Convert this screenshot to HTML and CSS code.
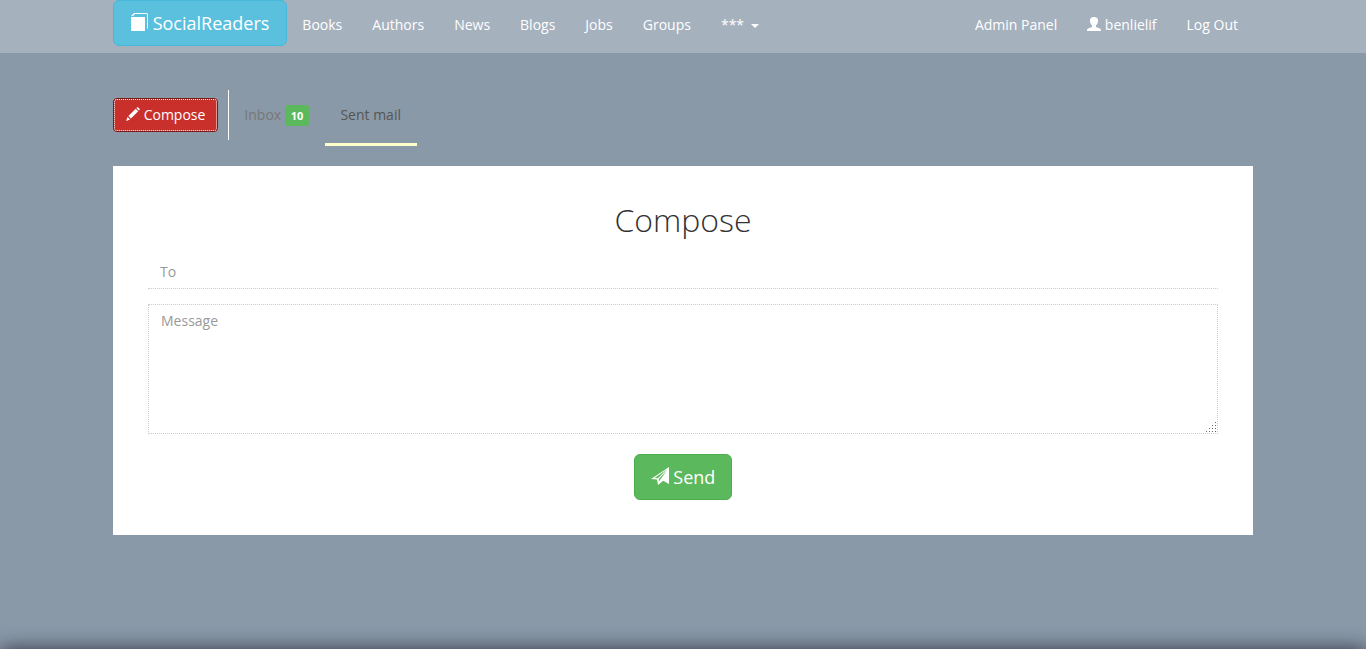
FILE: index.html
```html
<!DOCTYPE html>
<html lang="en">
<head>
<meta charset="utf-8">
<meta name="viewport" content="width=device-width, initial-scale=1">
<title>SocialReaders</title>
<link rel="stylesheet" href="styles.css">
</head>
<body>
<header class="navbar">
  <nav class="container navbar-inner">
    <a class="brand" href="#"><svg class="icon-lg" viewBox="0 0 18 18" aria-hidden="true"><path fill="currentColor" d="M1 4h14V18H2Q1 18 1 17zM1 3L4 0H16.500Q18 0 18 1.500V15L17 16V1H5L3 3z"/></svg> SocialReaders</a>
    <a class="nav-link" href="#">Books</a>
    <a class="nav-link" href="#">Authors</a>
    <a class="nav-link" href="#">News</a>
    <a class="nav-link" href="#">Blogs</a>
    <a class="nav-link" href="#">Jobs</a>
    <a class="nav-link" href="#">Groups</a>
    <a class="nav-link" href="#">*** <span class="caret"></span></a>
    <div class="nav-right">
      <a class="nav-link" href="#">Admin Panel</a>
      <a class="nav-link" href="#"><svg class="icon" viewBox="0 0 14 14" aria-hidden="true"><path fill="currentColor" d="M7 0C9.800 0 11 1.300 11 3.400C11 5.500 10.300 7.400 9 8.300V10L13 11.500Q14 12 14 13V14H0V13Q0 12 1 11.500L5 10V8.300C3.700 7.400 3 5.500 3 3.400C3 1.300 4.200 0 7 0z"/></svg> benlielif</a>
      <a class="nav-link" href="#">Log Out</a>
    </div>
  </nav>
</header>
<main class="container">
  <nav class="mail-tabs">
    <div class="compose-cell">
      <button class="compose-btn" type="button"><svg class="icon" viewBox="0 0 14 14" aria-hidden="true"><path fill="currentColor" d="M10.400 1.100L11.200.3Q11.600 0 12 .3L13.700 2Q14 2.400 13.700 2.800L12.900 3.600zM9.700 1.800L12.200 4.300L4.900 11.600L2.400 9.100zM1.600 9.900L4.100 12.400L0 14z"/></svg> Compose</button>
    </div>
    <a class="tab" href="#">Inbox <span class="badge">10</span></a>
    <a class="tab tab-active" href="#">Sent mail</a>
  </nav>
  <form class="panel">
    <h1 class="title">Compose</h1>
    <input class="field" type="text" placeholder="To" aria-label="To">
    <div class="message-wrap">
      <textarea class="message" placeholder="Message" aria-label="Message"></textarea>
      <svg class="grip" viewBox="0 0 10 10" shape-rendering="crispEdges" aria-hidden="true"><path fill="#666" d="M9 0h1v1H9zM9 3h1v1H9zM6 3h1v1H6zM9 6h1v1H9zM6 6h1v1H6zM3 6h1v1H3zM9 9h1v1H9zM6 9h1v1H6zM3 9h1v1H3zM0 9h1v1H0z"/></svg>
    </div>
    <button class="send-btn" type="button"><svg class="icon-lg" viewBox="0 0 18 18" aria-hidden="true"><path fill="currentColor" d="M18 0V17L12.200 13.800L7 18L6 12.500L0 12zM15.800 2.300L3.800 11L6.900 11.300zM16.300 3L7.800 12L7.900 14.500z"/></svg> Send</button>
  </form>
</main>
<footer class="footer"></footer>
</body>
</html>
```
FILE: styles.css
```css
* { box-sizing: border-box; }

body {
  display: flex;
  flex-direction: column;
  height: 100vh;
  margin: 0;
  overflow: hidden;
  background: #8999a8;
  color: #333;
  font: 14px/20px "Open Sans", sans-serif;
}

a { text-decoration: none; }

button, input, textarea { font: inherit; }

.container {
  width: 100%;
  max-width: 1140px;
  margin: 0 auto;
}

.icon { width: 14px; height: 14px; vertical-align: -1px; }
.icon-lg { width: 18px; height: 18px; vertical-align: -1px; }

.navbar { background: #a6b1be; }

.navbar-inner {
  display: flex;
  align-items: flex-start;
  height: 53px;
}

.brand,
.send-btn {
  padding: 10px 16px;
  border: 1px solid #46b8da;
  border-radius: 6px;
  background: #5bc0de;
  color: #fff;
  font-size: 18px;
  line-height: 24px;
}

.brand { padding-right: 17px; }

.nav-link {
  padding: 15px;
  color: #fff;
}

.nav-right { display: flex; margin-left: auto; }

.caret {
  display: inline-block;
  margin-left: 3px;
  border: 4px solid transparent;
  border-top-color: currentColor;
  border-bottom: 0;
  vertical-align: middle;
}

.mail-tabs {
  display: flex;
  align-items: flex-start;
  padding: 37px 0 20px;
}

.compose-cell {
  display: flex;
  align-items: center;
  height: 50px;
  padding-right: 10px;
  border-right: 1px solid #fff;
}

.compose-btn {
  height: 34px;
  padding: 0 12px;
  border: 1px solid #761c19;
  border-radius: 4px;
  outline: 1px dotted #fff;
  outline-offset: -2px;
  background: #c9302c;
  color: #fff;
}

.tab {
  height: 56px;
  padding: 15px 16px 15px 15px;
  border-bottom: 3px solid transparent;
  color: #777;
}

.tab-active {
  border-bottom-color: #ffc;
  color: #555;
}

.badge {
  display: inline-block;
  padding: 0 6px;
  border-radius: 3px;
  background: #5cb85c;
  color: #fff;
  font-size: 11px;
  font-weight: 700;
  line-height: 21px;
}

.panel {
  display: flex;
  flex-direction: column;
  align-items: center;
  padding: 35px;
  background: #fff;
}

.title {
  margin: 0 0 16px;
  font-size: 32px;
  font-weight: 300;
  line-height: 38px;
}

.field {
  width: 100%;
  height: 34px;
  padding: 6px 12px;
  border: 0;
  border-bottom: 1px dotted #ccc;
}

.message-wrap {
  position: relative;
  width: 100%;
  margin: 15px 0 20px;
}

.message {
  display: block;
  width: 100%;
  height: 130px;
  padding: 6px 12px;
  border: 1px dotted #ccc;
  resize: none;
}

.grip {
  position: absolute;
  right: 2px;
  bottom: 2px;
  width: 10px;
  height: 10px;
}

::placeholder { color: #999; }

.send-btn {
  border-color: #4cae4c;
  background: #5cb85c;
}

.footer {
  flex: none;
  height: 60px;
  margin-top: auto;
  margin-bottom: -60px;
  background: #333;
  box-shadow: 0 0 20px #334;
}
```
